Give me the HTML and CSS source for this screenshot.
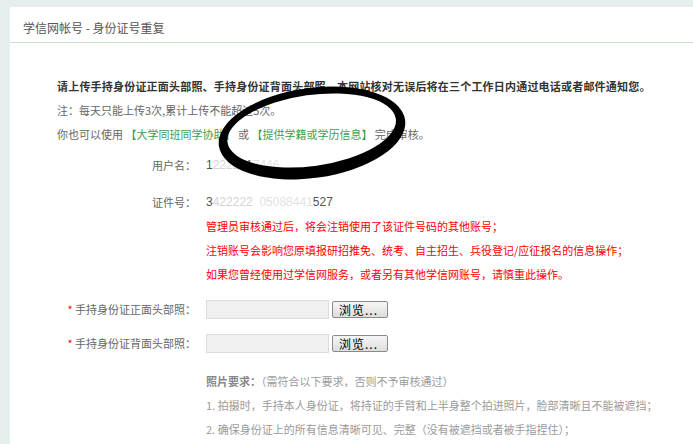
FILE: index.html
```html
<!DOCTYPE html>
<html lang="zh-CN">
<head>
<meta charset="utf-8">
<title>学信网帐号 - 身份证号重复</title>
<link rel="stylesheet" href="styles.css">
</head>
<body>
<div class="panel">
  <div class="header"><h1 class="title">学信网帐号 - 身份证号重复</h1></div>
  <div class="content">
    <p class="lead">请上传手持身份证正面头部照、手持身份证背面头部照，本网站核对无误后将在三个工作日内通过电话或者邮件通知您。</p>
    <p class="note">注：每天只能上传3次,累计上传不能超过5次。</p>
    <p class="note">你也可以使用 <a class="link">【大学同班同学协助】</a> 或 <a class="link">【提供学籍或学历信息】</a> 完成审核。</p>

    <div class="info-row first">
      <span class="label">用户名：</span>
      <span class="value">1<span class="erased">2222</span>51<span class="faint">7446</span></span>
    </div>
    <div class="info-row second">
      <span class="label">证件号：</span>
      <span class="value">3<span class="erased">422222</span> <span class="faint">&nbsp;05088441</span>527</span>
    </div>
    <div class="warn">
      <p>管理员审核通过后，将会注销使用了该证件号码的其他账号；</p>
      <p>注销账号会影响您原填报研招推免、统考、自主招生、兵役登记/应征报名的信息操作；</p>
      <p>如果您曾经使用过学信网服务，或者另有其他学信网账号，请慎重此操作。</p>
    </div>

    <div class="form-row">
      <span class="label"><span class="star">*</span> 手持身份证正面头部照：</span>
      <span class="file"><span class="file-input"></span><span class="browse">浏览...</span></span>
    </div>
    <div class="form-row">
      <span class="label"><span class="star">*</span> 手持身份证背面头部照：</span>
      <span class="file"><span class="file-input"></span><span class="browse">浏览...</span></span>
    </div>

    <div class="req">
      <p><b>照片要求：</b>（需符合以下要求，否则不予审核通过）</p>
      <p>1. 拍摄时，手持本人身份证，将持证的手臂和上半身整个拍进照片，脸部清晰且不能被遮挡；</p>
      <p>2. 确保身份证上的所有信息清晰可见、完整（没有被遮挡或者被手指捏住）；</p>
    </div>
  </div>
</div>
<svg class="scribble" width="693" height="444" viewBox="0 0 693 444">
  <path fill="#000" fill-rule="evenodd" d="M218 133 a94 45 0 1 0 188 0 a94 45 0 1 0 -188 0 Z M227 130.5 a85 35.5 0 1 0 170 0 a85 35.5 0 1 0 -170 0 Z" transform="rotate(-8 312 133)"/>
</svg>
</body>
</html>
```

FILE: styles.css
```css
html, body {
  margin: 0;
  padding: 0;
}
body {
  background: #e6eeed;
  font-family: "Noto Sans CJK SC", "Noto Sans", sans-serif;
  font-size: 11px;
  color: #555;
  overflow: hidden;
  height: 444px;
  position: relative;
}
p { margin: 0; }
.panel {
  margin: 7px 0 0 10px;
  background: #fff;
  min-height: 480px;
}
.header {
  padding: 15px 0 8px 13px;
  border-bottom: 1px solid #c6e0cb;
}
.title {
  margin: 0;
  font-size: 12px;
  font-weight: normal;
  line-height: 12px;
  color: #555;
}
.content {
  padding: 31px 0 0 47px;
}
.lead, .note {
  line-height: 24px;
}
.lead {
  font-weight: bold;
  color: #333;
  letter-spacing: 0.2px;
}
.note { color: #666; }
.link {
  color: #3c9d4e;
  text-decoration: none;
}
.info-row {
  display: flex;
  line-height: 24px;
  color: #666;
}
.info-row.first { margin-top: 7px; }
.info-row.second { margin-top: 13px; }
.label {
  width: 139px;
  padding-right: 10px;
  text-align: right;
  flex: none;
  color: #666;
}
.value {
  color: #555;
  font-family: "Liberation Sans", "Noto Sans CJK SC", sans-serif;
  font-size: 12px;
}
.erased { color: #d4d4d4; }
.faint { color: #e2e2e2; }
.warn {
  padding-left: 149px;
  color: #f00;
  line-height: 24px;
}
.form-row {
  display: flex;
  align-items: center;
  height: 24px;
  margin-top: 10px;
}
.warn + .form-row { margin-top: 11px; }
.star { color: #f00; }
.file {
  display: flex;
  align-items: center;
  gap: 3px;
}
.file-input {
  width: 121px;
  height: 17px;
  background: #f0f0f0;
  border: 1px solid #dcdcdc;
}
.browse {
  box-sizing: border-box;
  width: 56px;
  height: 17px;
  margin-top: 1px;
  border: 1px solid #8a8a8a;
  border-radius: 2px;
  background: linear-gradient(#f6f6f6, #dedede);
  color: #000;
  font-size: 12px;
  line-height: 15px;
  padding-left: 6px;
  letter-spacing: 1px;
}
.req {
  margin-top: 14px;
  padding-left: 149px;
  color: #9a9a9a;
  line-height: 24px;
}
.req b { color: #888; }
.scribble {
  position: absolute;
  left: 0;
  top: 0;
  pointer-events: none;
}
```
